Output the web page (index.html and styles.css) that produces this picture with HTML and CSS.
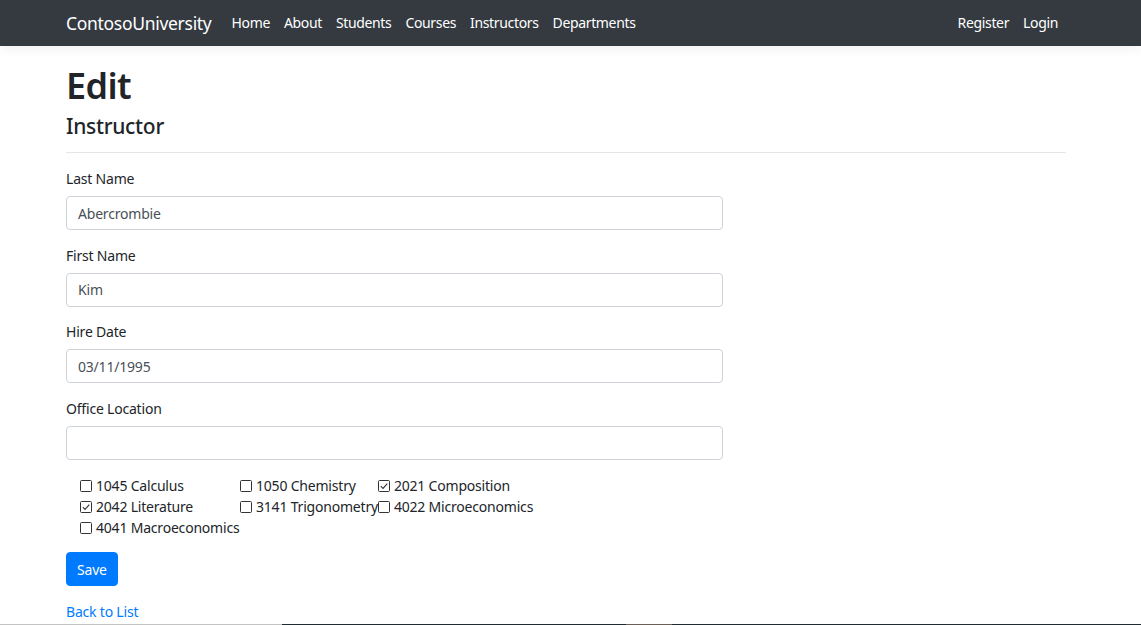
FILE: index.html
```html
<!DOCTYPE html>
<html lang="en">
<head>
<meta charset="utf-8">
<title>Edit - ContosoUniversity</title>
<link rel="stylesheet" href="styles.css">
</head>
<body>
<header>
  <nav class="navbar">
    <div class="container nav-inner">
      <a class="brand" href="#">ContosoUniversity</a>
      <ul class="nav nav-main">
        <li><a href="#">Home</a></li>
        <li><a href="#">About</a></li>
        <li><a href="#">Students</a></li>
        <li><a href="#">Courses</a></li>
        <li><a href="#">Instructors</a></li>
        <li><a href="#">Departments</a></li>
      </ul>
      <ul class="nav nav-right">
        <li><a href="#">Register</a></li>
        <li><a href="#">Login</a></li>
      </ul>
    </div>
  </nav>
</header>
<main class="container">
  <h1>Edit</h1>
  <h4>Instructor</h4>
  <hr>
  <div class="form-col">
    <form>
      <div class="form-group">
        <label>Last Name</label>
        <input class="form-control" type="text" value="Abercrombie">
      </div>
      <div class="form-group">
        <label>First Name</label>
        <input class="form-control" type="text" value="Kim">
      </div>
      <div class="form-group">
        <label>Hire Date</label>
        <input class="form-control" type="text" value="03/11/1995">
      </div>
      <div class="form-group">
        <label>Office Location</label>
        <input class="form-control" type="text" value="">
      </div>
      <div class="form-group">
        <table class="courses">
          <tr>
            <td class="c1"><span class="cb"><svg viewBox="0 0 12 12" width="12" height="12"><rect x="0.5" y="0.5" width="11" height="11" rx="1" fill="#fff" stroke="#333"/></svg></span>1045 Calculus</td>
            <td class="c2"><span class="cb"><svg viewBox="0 0 12 12" width="12" height="12"><rect x="0.5" y="0.5" width="11" height="11" rx="1" fill="#fff" stroke="#333"/></svg></span>1050 Chemistry</td>
            <td class="c3"><span class="cb"><svg viewBox="0 0 12 12" width="12" height="12"><rect x="0.5" y="0.5" width="11" height="11" rx="1" fill="#fff" stroke="#333"/><path d="M2.8 6.2 L5 8.4 L9.3 3.6" fill="none" stroke="#333" stroke-width="1.1"/></svg></span>2021 Composition</td>
          </tr>
          <tr>
            <td class="c1"><span class="cb"><svg viewBox="0 0 12 12" width="12" height="12"><rect x="0.5" y="0.5" width="11" height="11" rx="1" fill="#fff" stroke="#333"/><path d="M2.8 6.2 L5 8.4 L9.3 3.6" fill="none" stroke="#333" stroke-width="1.1"/></svg></span>2042 Literature</td>
            <td class="c2"><span class="cb"><svg viewBox="0 0 12 12" width="12" height="12"><rect x="0.5" y="0.5" width="11" height="11" rx="1" fill="#fff" stroke="#333"/></svg></span>3141 Trigonometry</td>
            <td class="c3"><span class="cb"><svg viewBox="0 0 12 12" width="12" height="12"><rect x="0.5" y="0.5" width="11" height="11" rx="1" fill="#fff" stroke="#333"/></svg></span>4022 Microeconomics</td>
          </tr>
          <tr>
            <td class="c1"><span class="cb"><svg viewBox="0 0 12 12" width="12" height="12"><rect x="0.5" y="0.5" width="11" height="11" rx="1" fill="#fff" stroke="#333"/></svg></span>4041 Macroeconomics</td>
            <td class="c2"></td>
            <td class="c3"></td>
          </tr>
        </table>
      </div>
      <div class="form-group">
        <button type="button" class="btn">Save</button>
      </div>
    </form>
  </div>
  <div class="back">
    <a href="#">Back to List</a>
  </div>
</main>
<div class="screen-edge"></div>
</body>
</html>
```

FILE: styles.css
```css
html, body {
  margin: 0;
  padding: 0;
}
body {
  font-family: "Noto Sans", "Open Sans", "Liberation Sans", sans-serif;
  font-size: 14px;
  line-height: 21px;
  color: #212529;
  background: #fff;
  height: 625px;
  overflow: hidden;
}
a {
  text-decoration: none;
}
.container {
  width: 1000px;
  margin-left: 66px;
}
.navbar {
  height: 46px;
  background: #343a40;
  box-shadow: 0 4px 10px rgba(0, 0, 0, 0.05);
}
.nav-inner {
  display: flex;
  align-items: center;
  height: 46px;
  padding-bottom: 1px;
  box-sizing: border-box;
}
.brand {
  color: #fff;
  font-size: 17.5px;
  line-height: 26px;
  margin-right: 13px;
  letter-spacing: -0.3px;
}
.nav {
  list-style: none;
  margin: 0;
  padding: 0;
  display: flex;
}
.nav a {
  display: block;
  color: #fff;
  padding: 0 7px;
  line-height: 21px;
  letter-spacing: -0.35px;
}
.nav-right {
  margin-left: auto;
  margin-right: 1px;
}
h1 {
  font-size: 36px;
  font-weight: 600;
  line-height: 48px;
  margin: 16px 0 0;
  letter-spacing: -0.6px;
}
h4 {
  font-size: 21px;
  font-weight: 500;
  line-height: 29px;
  margin: 2px 0 0;
  letter-spacing: -0.3px;
}
hr {
  border: 0;
  border-top: 1px solid rgba(0, 0, 0, 0.1);
  margin: 11px 0 15px;
}
.form-col {
  width: 657px;
}
.form-group {
  margin-bottom: 14.67px;
}
label {
  display: block;
  margin-bottom: 7px;
  letter-spacing: -0.2px;
}
.form-control {
  display: block;
  box-sizing: border-box;
  width: 100%;
  height: 34px;
  padding: 0 11px;
  font-family: inherit;
  font-size: 14px;
  color: #495057;
  background: #fff;
  border: 1px solid #ced4da;
  border-radius: 4px;
  letter-spacing: -0.2px;
}
.courses {
  border-collapse: collapse;
  margin-left: 14px;
  margin-top: 1px;
}
.courses td {
  padding: 0;
  height: 21px;
  white-space: nowrap;
  letter-spacing: -0.2px;
}
.courses .c1 { width: 160px; }
.courses .c2 { width: 137px; }
.cb {
  display: inline-block;
  width: 12px;
  height: 12px;
  margin-right: 4px;
  vertical-align: -1px;
}
.cb svg {
  display: block;
}
.btn {
  font-family: inherit;
  font-size: 14px;
  color: #fff;
  background: #007bff;
  border: 1px solid #007bff;
  border-radius: 4px;
  height: 34px;
  padding: 0 10px;
  letter-spacing: -0.2px;
}
.back a {
  color: #007bff;
  letter-spacing: -0.2px;
}
.screen-edge {
  position: fixed;
  left: 0;
  right: 0;
  bottom: 0;
  height: 1px;
  background: linear-gradient(to right, #c3c3c3 0, #c3c3c3 282px, #1f2b31 282px, #1f2b31 626px, #6b6058 626px, #6b6058 672px, #1f2b31 672px);
}
```
